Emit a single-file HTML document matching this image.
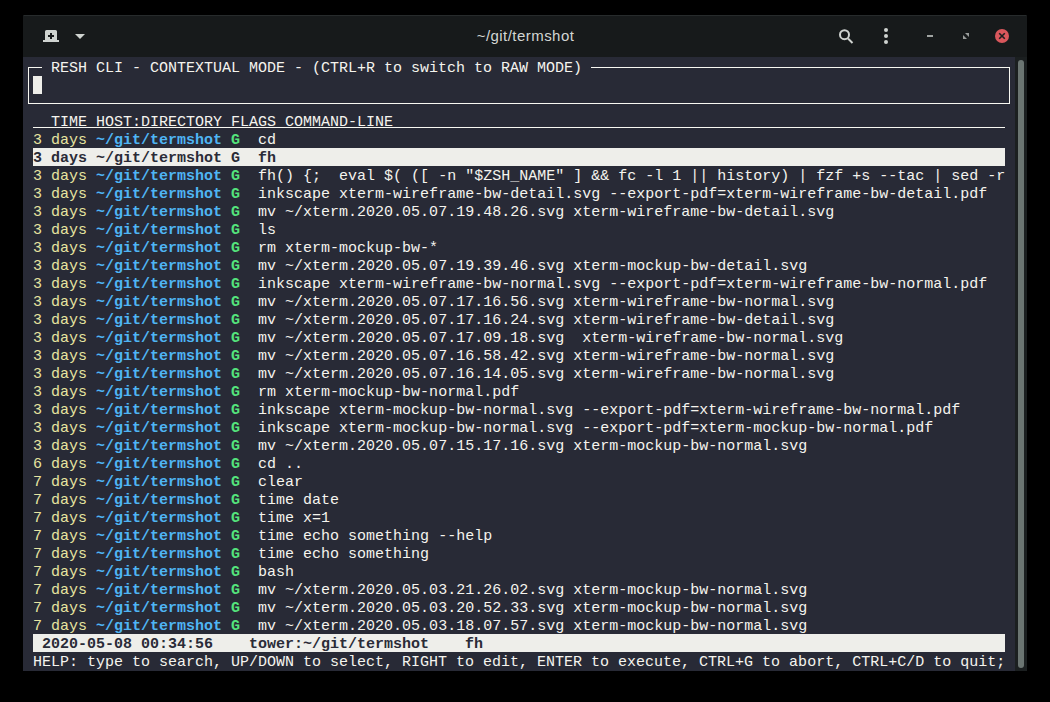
<!DOCTYPE html>
<html><head><meta charset="utf-8">
<style>
html,body{margin:0;padding:0;background:#000;width:1050px;height:702px;overflow:hidden;}
#win{position:absolute;left:23px;top:15px;width:1004px;height:656px;background:#171a1b;}
#title{position:absolute;left:23px;top:15px;width:1004px;height:42px;line-height:42px;text-align:center;color:#d3d6d3;font-family:"Liberation Sans",sans-serif;font-size:15px;letter-spacing:0.45px;text-indent:1px;}
#term{position:absolute;left:23px;top:57px;width:992px;height:614px;background:#282a36;}
#sbtrough{position:absolute;left:1015px;top:57px;width:12px;height:614px;background:#1b1f20;}
#thumb{position:absolute;left:1018px;top:60px;width:6px;height:608px;border-radius:3px;background:#6b7572;}
.r{position:absolute;left:33px;height:18px;line-height:22px;white-space:pre;font-family:"Liberation Mono",monospace;font-size:15px;color:#f5f4ee;}
.t{color:#e7e4a0;}
.d{color:#4fb5f4;font-weight:bold;}
.g{color:#54e47c;font-weight:bold;}
.sel{background:#eeeeea;color:#2a2b37;font-weight:bold;width:972px;}
.ul{position:absolute;left:0;top:15px;width:972px;height:1px;background:#f8f8f2;}
#box{position:absolute;left:28px;top:67px;width:980px;height:35px;border:1px solid #f8f8f2;}
#boxlbl{position:absolute;left:42px;top:58px;}
#cursor{position:absolute;left:33px;top:76px;width:9px;height:18px;background:#eeeeea;}
svg{position:absolute;left:0;top:0;}
</style></head><body>
<div id="win"></div><div style="position:absolute;left:24px;top:15px;width:1002px;height:1px;background:#272b2c;"></div>
<div id="title">~/git/termshot</div>
<svg width="1050" height="60" viewBox="0 0 1050 60">
 <!-- new tab -->
 <path d="M45 40 V31.5 Q45 30 46.5 30 H55.5 Q57 30 57 31.5 V40 H59 V42 H43 V40 Z" fill="#cfd3d0"/>
 <rect x="48" y="35" width="6" height="2" fill="#171a1b"/>
 <rect x="50" y="33" width="2" height="6" fill="#171a1b"/>
 <path d="M75 34 H85 L80 39 Z" fill="#cfd3d0"/>
 <!-- search -->
 <circle cx="844.5" cy="34.7" r="4.5" fill="none" stroke="#cfd3d0" stroke-width="2"/>
 <path d="M848 38.5 L852.5 43" stroke="#cfd3d0" stroke-width="2"/>
 <!-- kebab -->
 <circle cx="886" cy="30" r="2" fill="#cfd3d0"/>
 <circle cx="886" cy="36" r="2" fill="#cfd3d0"/>
 <circle cx="886" cy="42" r="2" fill="#cfd3d0"/>
 <!-- minimize -->
 <rect x="927" y="35" width="6" height="2" fill="#a0a4a2"/>
 <!-- restore -->
 <path d="M965 33 H969 V37 Z M963 35 L967 39 H963 Z" fill="#999c9b"/>
 <!-- close -->
 <circle cx="1002" cy="36" r="7" fill="#d9575c"/>
 <path d="M999.2 33.2 L1004.8 38.8 M1004.8 33.2 L999.2 38.8" stroke="#1b1e1f" stroke-width="1.6"/>
</svg>
<div id="term"></div>
<div id="sbtrough"></div>
<div id="thumb"></div>
<div id="box"></div>
<div class="r" id="boxlbl" style="background:#282a36;"> RESH CLI - CONTEXTUAL MODE - (CTRL+R to switch to RAW MODE) </div>
<div id="cursor"></div>
<div class="r hdr" style="top:112px">  TIME HOST:DIRECTORY FLAGS COMMAND-LINE<div class="ul"></div></div>
<div class="r" style="top:130px"><span class="t">3 days</span> <span class="d">~/git/termshot</span> <span class="g">G</span>  cd</div>
<div class="r sel" style="top:148px">3 days ~/git/termshot G  fh</div>
<div class="r" style="top:166px"><span class="t">3 days</span> <span class="d">~/git/termshot</span> <span class="g">G</span>  fh() {;  eval $( ([ -n &quot;$ZSH_NAME&quot; ] &amp;&amp; fc -l 1 || history) | fzf +s --tac | sed -r</div>
<div class="r" style="top:184px"><span class="t">3 days</span> <span class="d">~/git/termshot</span> <span class="g">G</span>  inkscape xterm-wireframe-bw-detail.svg --export-pdf=xterm-wireframe-bw-detail.pdf</div>
<div class="r" style="top:202px"><span class="t">3 days</span> <span class="d">~/git/termshot</span> <span class="g">G</span>  mv ~/xterm.2020.05.07.19.48.26.svg xterm-wireframe-bw-detail.svg</div>
<div class="r" style="top:220px"><span class="t">3 days</span> <span class="d">~/git/termshot</span> <span class="g">G</span>  ls</div>
<div class="r" style="top:238px"><span class="t">3 days</span> <span class="d">~/git/termshot</span> <span class="g">G</span>  rm xterm-mockup-bw-*</div>
<div class="r" style="top:256px"><span class="t">3 days</span> <span class="d">~/git/termshot</span> <span class="g">G</span>  mv ~/xterm.2020.05.07.19.39.46.svg xterm-mockup-bw-detail.svg</div>
<div class="r" style="top:274px"><span class="t">3 days</span> <span class="d">~/git/termshot</span> <span class="g">G</span>  inkscape xterm-wireframe-bw-normal.svg --export-pdf=xterm-wireframe-bw-normal.pdf</div>
<div class="r" style="top:292px"><span class="t">3 days</span> <span class="d">~/git/termshot</span> <span class="g">G</span>  mv ~/xterm.2020.05.07.17.16.56.svg xterm-wireframe-bw-normal.svg</div>
<div class="r" style="top:310px"><span class="t">3 days</span> <span class="d">~/git/termshot</span> <span class="g">G</span>  mv ~/xterm.2020.05.07.17.16.24.svg xterm-wireframe-bw-detail.svg</div>
<div class="r" style="top:328px"><span class="t">3 days</span> <span class="d">~/git/termshot</span> <span class="g">G</span>  mv ~/xterm.2020.05.07.17.09.18.svg  xterm-wireframe-bw-normal.svg</div>
<div class="r" style="top:346px"><span class="t">3 days</span> <span class="d">~/git/termshot</span> <span class="g">G</span>  mv ~/xterm.2020.05.07.16.58.42.svg xterm-wireframe-bw-normal.svg</div>
<div class="r" style="top:364px"><span class="t">3 days</span> <span class="d">~/git/termshot</span> <span class="g">G</span>  mv ~/xterm.2020.05.07.16.14.05.svg xterm-wireframe-bw-normal.svg</div>
<div class="r" style="top:382px"><span class="t">3 days</span> <span class="d">~/git/termshot</span> <span class="g">G</span>  rm xterm-mockup-bw-normal.pdf</div>
<div class="r" style="top:400px"><span class="t">3 days</span> <span class="d">~/git/termshot</span> <span class="g">G</span>  inkscape xterm-mockup-bw-normal.svg --export-pdf=xterm-wireframe-bw-normal.pdf</div>
<div class="r" style="top:418px"><span class="t">3 days</span> <span class="d">~/git/termshot</span> <span class="g">G</span>  inkscape xterm-mockup-bw-normal.svg --export-pdf=xterm-mockup-bw-normal.pdf</div>
<div class="r" style="top:436px"><span class="t">3 days</span> <span class="d">~/git/termshot</span> <span class="g">G</span>  mv ~/xterm.2020.05.07.15.17.16.svg xterm-mockup-bw-normal.svg</div>
<div class="r" style="top:454px"><span class="t">6 days</span> <span class="d">~/git/termshot</span> <span class="g">G</span>  cd ..</div>
<div class="r" style="top:472px"><span class="t">7 days</span> <span class="d">~/git/termshot</span> <span class="g">G</span>  clear</div>
<div class="r" style="top:490px"><span class="t">7 days</span> <span class="d">~/git/termshot</span> <span class="g">G</span>  time date</div>
<div class="r" style="top:508px"><span class="t">7 days</span> <span class="d">~/git/termshot</span> <span class="g">G</span>  time x=1</div>
<div class="r" style="top:526px"><span class="t">7 days</span> <span class="d">~/git/termshot</span> <span class="g">G</span>  time echo something --help</div>
<div class="r" style="top:544px"><span class="t">7 days</span> <span class="d">~/git/termshot</span> <span class="g">G</span>  time echo something</div>
<div class="r" style="top:562px"><span class="t">7 days</span> <span class="d">~/git/termshot</span> <span class="g">G</span>  bash</div>
<div class="r" style="top:580px"><span class="t">7 days</span> <span class="d">~/git/termshot</span> <span class="g">G</span>  mv ~/xterm.2020.05.03.21.26.02.svg xterm-mockup-bw-normal.svg</div>
<div class="r" style="top:598px"><span class="t">7 days</span> <span class="d">~/git/termshot</span> <span class="g">G</span>  mv ~/xterm.2020.05.03.20.52.33.svg xterm-mockup-bw-normal.svg</div>
<div class="r" style="top:616px"><span class="t">7 days</span> <span class="d">~/git/termshot</span> <span class="g">G</span>  mv ~/xterm.2020.05.03.18.07.57.svg xterm-mockup-bw-normal.svg</div>
<div class="r sel st" style="top:634px"> 2020-05-08 00:34:56    tower:~/git/termshot    fh                                                        </div>
<div class="r" style="top:652px">HELP: type to search, UP/DOWN to select, RIGHT to edit, ENTER to execute, CTRL+G to abort, CTRL+C/D to quit;</div>
</body></html>
